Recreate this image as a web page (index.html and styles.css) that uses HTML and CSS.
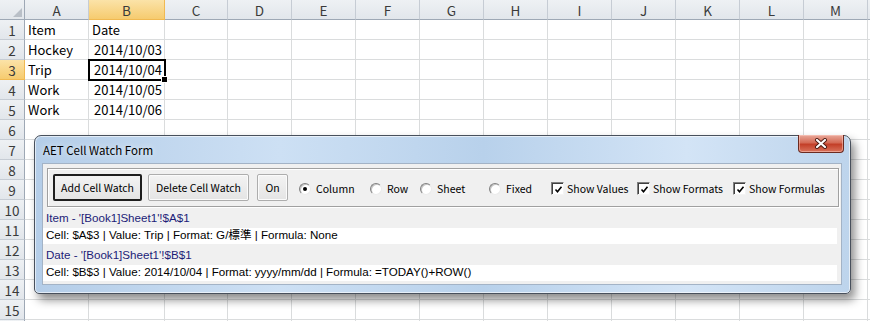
FILE: index.html
```html
<!DOCTYPE html>
<html lang="en">
<head>
    <meta charset="UTF-8">
    <title>AET Cell Watch Form</title>
    <link rel="stylesheet" href="styles.css">
</head>
<body>
    <div class="sheet">
        <div class="grid" id="grid">
            <!-- Cells are filled in by the script below -->
        </div>

        <div class="window">
            <div class="titlebar">
                <span class="title">AET Cell Watch Form</span>
                <div class="close">
                    <svg width="14" height="11" viewBox="0 0 14 11">
                        <path d="M3 2 L11 9 M11 2 L3 9" stroke="#4a1a12" stroke-width="4" stroke-linecap="round"/>
                        <path d="M3 2 L11 9 M11 2 L3 9" stroke="#fff" stroke-width="2.2" stroke-linecap="round"/>
                    </svg>
                </div>
            </div>
            <div class="client">
                <div class="toolbar">
                    <button class="btn btn-add">Add Cell Watch</button>
                    <button class="btn btn-delete">Delete Cell Watch</button>
                    <button class="btn btn-on">On</button>
                    <div class="options">
                        <label class="opt"><span class="radio checked"></span>Column</label>
                        <label class="opt"><span class="radio"></span>Row</label>
                        <label class="opt"><span class="radio"></span>Sheet</label>
                        <label class="opt"><span class="radio"></span>Fixed</label>
                        <label class="opt"><span class="check"><svg width="9" height="9" viewBox="0 0 9 9"><path d="M1.5 4.5 L3.5 6.8 L7.5 1.8" fill="none" stroke="#000" stroke-width="1.6"/></svg></span>Show Values</label>
                        <label class="opt"><span class="check"><svg width="9" height="9" viewBox="0 0 9 9"><path d="M1.5 4.5 L3.5 6.8 L7.5 1.8" fill="none" stroke="#000" stroke-width="1.6"/></svg></span>Show Formats</label>
                        <label class="opt"><span class="check"><svg width="9" height="9" viewBox="0 0 9 9"><path d="M1.5 4.5 L3.5 6.8 L7.5 1.8" fill="none" stroke="#000" stroke-width="1.6"/></svg></span>Show Formulas</label>
                    </div>
                </div>
                <div class="watch-list">
                    <div class="watch-head">Item - '[Book1]Sheet1'!$A$1</div>
                    <div class="watch-line">Cell: $A$3 | Value: Trip | Format: G/標準 | Formula: None</div>
                    <div class="watch-head">Date - '[Book1]Sheet1'!$B$1</div>
                    <div class="watch-line">Cell: $B$3 | Value: 2014/10/04 | Format: yyyy/mm/dd | Formula: =TODAY()+ROW()</div>
                </div>
            </div>
        </div>
    </div>

    <script>
        const letters = ['A', 'B', 'C', 'D', 'E', 'F', 'G', 'H', 'I', 'J', 'K', 'L', 'M', ''];
        const data = [
            ['Item', 'Date'],
            ['Hockey', '2014/10/03'],
            ['Trip', '2014/10/04'],
            ['Work', '2014/10/05'],
            ['Work', '2014/10/06']
        ];
        const grid = document.getElementById('grid');

        function addDiv(className, text) {
            const div = document.createElement('div');
            div.className = className;
            if (text) div.textContent = text;
            grid.appendChild(div);
        }

        // Column headers
        addDiv('hd corner');
        letters.forEach(l => addDiv(l === 'B' ? 'hd col sel' : 'hd col', l));

        // Rows (row 16 only peeks in at the bottom edge)
        for (let r = 1; r <= 16; r++) {
            addDiv(r === 3 ? 'hd row sel' : 'hd row', r < 16 ? String(r) : '');
            const values = data[r - 1] || [];
            letters.forEach((l, i) => {
                let cls = 'cell';
                if (i === 1 && r > 1) cls += ' num';
                if (i === 1 && r === 3) cls += ' active';
                addDiv(cls, values[i] || '');
            });
        }
    </script>
</body>
</html>
```

FILE: styles.css
```css
body {
    margin: 0;
    background: #fff;
    font-family: "Noto Sans CJK JP", "Liberation Sans", sans-serif;
    overflow: hidden;
}
.sheet {
    position: relative;
    width: 870px;
    height: 321px;
    overflow: hidden;
}

/* spreadsheet */
.grid {
    display: grid;
    grid-template-columns: 25px 64px 76px 63px repeat(10, 64px) 1fr;
    grid-auto-rows: 20px;
}
.cell {
    box-sizing: border-box;
    border-right: 1px solid #dadcdd;
    border-bottom: 1px solid #dadcdd;
    font-size: 13px;
    line-height: 20px;
    padding: 0 3px;
    color: #000;
    white-space: nowrap;
    position: relative;
}
.cell.num {
    text-align: right;
    padding-right: 2px;
}
.cell.active {
    outline: 2px solid #000;
    outline-offset: -1px;
    z-index: 1;
}
.cell.active::after {
    content: "";
    position: absolute;
    right: -4px;
    bottom: -4px;
    width: 5px;
    height: 5px;
    background: #000;
    border: 1px solid #fff;
}
.hd {
    box-sizing: border-box;
    background: linear-gradient(#eef1f4, #e2e6eb);
    border-right: 1px solid #c6ccd4;
    border-bottom: 1px solid #c6ccd4;
    color: #3a3a3a;
    font-size: 13.5px;
    line-height: 20px;
    text-align: center;
}
.hd.col {
    border-bottom-color: #9ea8b5;
}
.hd.row {
    border-right-color: #9ea8b5;
}
.hd.sel {
    background: linear-gradient(#fbe3a8, #f6cb6f);
    border-color: #f0b952;
}
.corner {
    position: relative;
    border-right-color: #9ea8b5;
    border-bottom-color: #9ea8b5;
}
.corner::after {
    content: "";
    position: absolute;
    right: 2px;
    bottom: 2px;
    width: 9px;
    height: 9px;
    background: #b9bfc7;
    clip-path: polygon(100% 0, 100% 100%, 0 100%);
}

/* form window */
.window {
    position: absolute;
    left: 34px;
    top: 135px;
    width: 817px;
    height: 159px;
    box-sizing: border-box;
    border: 1px solid #48505c;
    border-radius: 7px 7px 5px 5px;
    background: linear-gradient(to right, #b4cde8, #cde0f4 30%, #b8d1eb 55%, #d3e4f6 80%, #bdd4ec);
    box-shadow: inset 0 0 0 1px rgba(255, 255, 255, 0.6), 4px 6px 10px rgba(0, 0, 0, 0.45);
    padding: 0 8px 8px 7px;
    display: flex;
    flex-direction: column;
}
.titlebar {
    height: 27px;
    position: relative;
    display: flex;
    align-items: center;
}
.title {
    font-size: 11.5px;
    line-height: 16px;
    color: #000;
    padding-left: 1px;
    padding-top: 1px;
    text-shadow: 0 0 6px rgba(255, 255, 255, 0.9);
}
.close {
    position: absolute;
    top: -1px;
    right: -2px;
    width: 46px;
    height: 18px;
    box-sizing: border-box;
    border: 1px solid #6b2a20;
    border-top: none;
    border-radius: 0 0 4px 4px;
    background: linear-gradient(#e9a99b, #d46a55 45%, #c33f28 55%, #d9735c);
    box-shadow: inset 0 0 0 1px rgba(255, 210, 200, 0.5);
    display: flex;
    align-items: center;
    justify-content: center;
}
.client {
    flex: 1;
    background: #f0f0f0;
    border: 1px solid #a3b3c6;
    display: flex;
    flex-direction: column;
}
.toolbar {
    margin: 4px 2px 0 4px;
    border: 1px solid #a0a0a0;
    box-shadow: inset 1px 1px 0 #fff, 1px 1px 0 #fff;
    padding: 5px 0 5px 5px;
    display: flex;
    align-items: center;
}
.btn {
    font-family: "Noto Sans CJK JP", "Liberation Sans", sans-serif;
    font-size: 10.5px;
    color: #000;
    height: 27px;
    padding: 0;
    white-space: nowrap;
    border: 1px solid #adadad;
    border-radius: 2px;
    background: linear-gradient(#f3f3f3, #e4e4e4);
    box-shadow: inset 0 0 0 1px #fbfbfb;
}
.btn-add {
    width: 89px;
    margin-right: 6px;
    border: 2px solid #1e1e1e;
    box-shadow: none;
}
.btn-delete {
    width: 101px;
    margin-right: 8px;
}
.btn-on {
    width: 31px;
    margin-right: 11px;
}
.options {
    display: grid;
    grid-template-columns: 71px 50px 69px 62px 86px 96px auto;
    align-items: center;
}
.opt {
    display: flex;
    align-items: center;
    font-size: 10.5px;
    line-height: 16px;
    color: #000;
    white-space: nowrap;
    padding-top: 2px;
}
.radio {
    position: relative;
    width: 12px;
    height: 12px;
    box-sizing: border-box;
    border-radius: 50%;
    border: 1px solid;
    border-color: #808080 #eaeaea #eaeaea #808080;
    box-shadow: inset 1px 1px 0 #c4c4c4;
    background: #fff;
    margin-right: 5px;
}
.radio.checked::after {
    content: "";
    position: absolute;
    left: 3px;
    top: 3px;
    width: 4px;
    height: 4px;
    border-radius: 50%;
    background: #000;
}
.check {
    width: 13px;
    height: 13px;
    box-sizing: border-box;
    border: 1px solid;
    border-color: #808080 #f4f4f4 #f4f4f4 #808080;
    box-shadow: inset 1px 1px 0 #404040;
    background: #fff;
    margin-right: 3px;
    display: flex;
    align-items: center;
    justify-content: center;
}
.check svg {
    margin: 1px 0 0 1px;
}
.watch-list {
    flex: 1;
    padding-right: 4px;
    font-family: "Liberation Sans", "Noto Sans CJK JP", sans-serif;
    font-size: 11.6px;
    white-space: nowrap;
}
.watch-head {
    padding: 4px 3px 3px;
    line-height: 14px;
    color: #1c1c78;
}
.watch-line {
    background: #fff;
    padding: 0 3px 2px;
    line-height: 14px;
    color: #000;
}
```
